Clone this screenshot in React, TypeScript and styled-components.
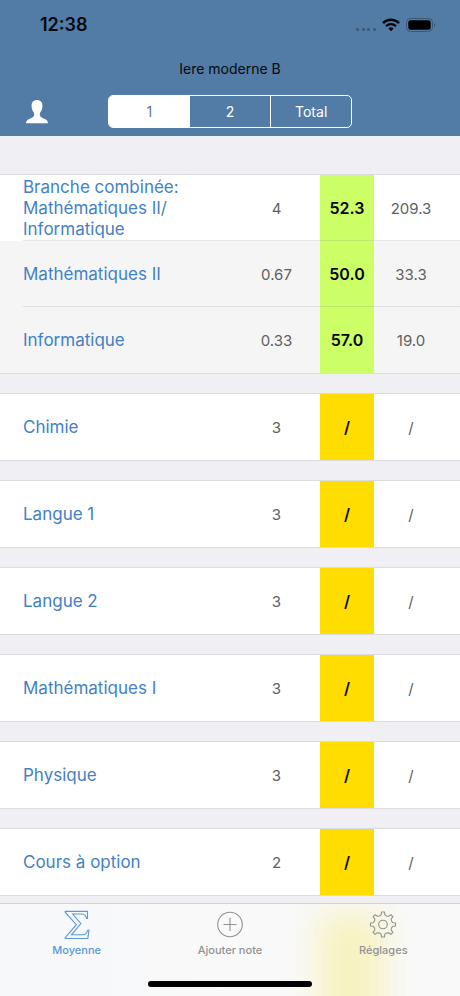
import React, { useState } from "react";
import styled, { createGlobalStyle } from "styled-components";

const GlobalStyle = createGlobalStyle`
  *, *::before, *::after { box-sizing: border-box; }
  body {
    margin: 0;
    background: #efeff4;
    font-family: Inter, "Liberation Sans", sans-serif;
  }
  button { font: inherit; border: 0; padding: 0; background: none; cursor: pointer; }
`;

const Page = styled.div`
  display: flex;
  flex-direction: column;
  min-height: 100vh;
`;

const Header = styled.header`
  position: sticky;
  top: 0;
  z-index: 1;
  background: #527ca5;
  padding-bottom: 8px;
`;

const StatusBar = styled.div`
  display: flex;
  align-items: center;
  justify-content: space-between;
  height: 52px;
  padding: 0 24px 2px 40px;
`;

const Clock = styled.time`
  font-size: 18px;
  line-height: 24px;
  font-weight: 600;
  color: #05090d;
`;

const StatusIcons = styled.div`
  display: flex;
  align-items: center;
  gap: 6px;
`;

const Title = styled.h1`
  margin: 0;
  padding: 6px 0 16px;
  font-size: 14px;
  line-height: 21px;
  font-weight: 400;
  text-align: center;
  color: #05090d;
`;

const Controls = styled.div`
  display: grid;
  grid-template-columns: 1fr 244px 1fr;
  align-items: center;
`;

const ProfileButton = styled.button`
  justify-self: start;
  display: flex;
  margin-left: 25px;
`;

const Segments = styled.div`
  display: grid;
  grid-template-columns: repeat(3, 1fr);
  height: 33px;
  border: 1px solid #fff;
  border-radius: 5px;
  overflow: hidden;
`;

const Segment = styled.button<{ $active: boolean; $divided: boolean }>`
  && {
    background: ${(p) => (p.$active ? "#fff" : "transparent")};
    color: ${(p) => (p.$active ? "#527ca5" : "#fff")};
    border-left: ${(p) => (p.$divided ? "1px solid #fff" : "0")};
    font-size: 14px;
  }
`;

const Content = styled.main`
  flex: 1;
  display: flex;
  flex-direction: column;
  gap: 19px;
  padding: 38px 0 7px;
`;

const Group = styled.table`
  width: 100%;
  table-layout: fixed;
  border-collapse: separate;
  border-spacing: 0;
  border-top: 1px solid #dcdce0;
  border-bottom: 1px solid #dcdce0;
`;

const NameCol = styled.col``;
const CoefficientCol = styled.col`width: 87px;`;
const AverageCol = styled.col`width: 54px;`;
const PointsCol = styled.col`width: 86px;`;

const Row = styled.tr<{ $nested: boolean }>`
  height: 66px;
  background: ${(p) => (p.$nested ? "#f5f5f5" : "#fff")};
  &:not(:last-child) > * {
    background-image: linear-gradient(#7777882e, #7777882e);
    background-repeat: no-repeat;
    background-position: 0 100%;
    background-size: 100% 1px;
  }
  &:not(:last-child) > th { background-position: 23px 100%; }
`;

const Name = styled.th`
  padding: 0 0 0 23px;
  text-align: left;
  font-size: 17px;
  line-height: 21px;
  font-weight: 400;
  color: #4381c4;
`;

const Value = styled.td`
  padding: 0;
  text-align: center;
  font-size: 15px;
  line-height: 21px;
  color: #606060;
`;

const Average = styled(Value)<{ $graded: boolean }>`
  font-size: 16px;
  font-weight: 600;
  color: #050505;
  background-color: ${(p) => (p.$graded ? "#ccff66" : "#ffdd00")};
`;

const Points = styled(Value)`
  padding-right: 12px;
`;

const TabBar = styled.nav`
  position: sticky;
  bottom: 0;
  overflow: hidden;
  height: 93px;
  border-top: 1px solid #d2d2d7;
  background: linear-gradient(90deg, #f6f8fa, #f9f9f9 50%);
`;

const Glow = styled.div`
  position: absolute;
  top: 10px;
  bottom: -40px;
  right: 76px;
  width: 66px;
  background: #f7f2c0;
  filter: blur(16px);
`;

const Tabs = styled.div`
  position: relative;
  display: grid;
  grid-template-columns: repeat(3, 1fr);
`;

const Tab = styled.button<{ $active: boolean }>`
  && {
    display: flex;
    flex-direction: column;
    align-items: center;
    gap: 1px;
    padding-top: 5px;
    font-size: 11px;
    line-height: 16px;
    font-weight: 500;
    color: ${(p) => (p.$active ? "#5b98d6" : "#929292")};
  }
`;

const HomeIndicator = styled.div`
  position: relative;
  width: 164px;
  height: 6px;
  margin: 23px auto 0;
  border-radius: 3px;
  background: #000;
`;

const SignalDots = () => (
  <svg width="20" height="14" viewBox="0 0 20 14" fill="#3c5c7c" aria-hidden="true">
    {[0, 6, 11, 17].map((x) => (
      <rect key={x} x={x} y="10" width="3" height="3" rx="1" />
    ))}
  </svg>
);

const WifiIcon = () => (
  <svg width="18" height="14" viewBox="0 0 18 14" fill="none" stroke="#05090d" aria-hidden="true">
    <path d="M1 5.1a11.3 11.3 0 0 1 16 0" strokeWidth="2.5" />
    <path d="M4 8.2a7.1 7.1 0 0 1 10 0" strokeWidth="2.3" />
    <path d="M9 13.2 6.4 10.6a3.7 3.7 0 0 1 5.2 0z" fill="#05090d" stroke="none" />
  </svg>
);

const BatteryIcon = () => (
  <svg width="30" height="14" viewBox="0 0 30 14" aria-hidden="true">
    <rect x="0.5" y="0.5" width="26" height="13" rx="4" fill="none" stroke="#3a5876" />
    <rect x="2.3" y="2.3" width="22.4" height="9.4" rx="2.3" fill="#000" />
    <path d="M28 4.8c1.8.7 1.8 3.7 0 4.4z" fill="#3a5876" />
  </svg>
);

const PersonIcon = () => (
  <svg width="24" height="26" viewBox="0 0 24 26" fill="#fff" aria-hidden="true">
    <path d="M12 1C15.500 1 17.600 3.200 17.400 7C17.300 9.700 16.700 11.800 14.900 13.900V16.200C15.100 17.700 16.400 18.600 18.600 19.400C21.400 20.400 22.800 21.300 23 24.300H1C1.200 21.300 2.600 20.400 5.400 19.400C7.600 18.600 8.900 17.700 9.100 16.200V13.900C7.300 11.800 6.700 9.700 6.600 7C6.400 3.200 8.500 1 12 1Z" />
  </svg>
);

const SigmaIcon = () => (
  <svg width="30" height="32" viewBox="0 0 30 32" fill="none" stroke="currentColor" strokeWidth="1.1" aria-hidden="true">
    <path d="M3.200 2.400H25.500V9.400H24.600C24 6.200 22.800 5 19.500 5H10.700L18.800 14.500L9.500 25.800H20.500C23.500 25.800 24.800 24.500 25.800 21.200H27L25.800 29.500H3.200V28.700L14.300 15.700L3.200 3.200Z" />
  </svg>
);

const PlusIcon = () => (
  <svg width="30" height="32" viewBox="0 0 30 32" fill="none" stroke="currentColor" strokeWidth="1.1" aria-hidden="true">
    <circle cx="15" cy="15.5" r="12.3" />
    <path d="M15 9V22M8.500 15.500H21.500" />
  </svg>
);

const gearPath = (() => {
  const teeth = 8;
  const profile: Array<[number, number]> = [
    [-22.5, 9.2], [-12.5, 9.7], [-9.5, 10.3], [-7, 12.6], [7, 12.6], [9.5, 10.3], [12.5, 9.7],
  ];
  const points: string[] = [];
  for (let i = 0; i < teeth; i++) {
    for (const [offset, radius] of profile) {
      const angle = ((i * 360) / teeth + offset - 90) * (Math.PI / 180);
      points.push(`${(15 + radius * Math.cos(angle)).toFixed(2)} ${(15.5 + radius * Math.sin(angle)).toFixed(2)}`);
    }
  }
  return `M${points.join("L")}Z`;
})();

const GearIcon = () => (
  <svg width="30" height="32" viewBox="0 0 30 32" fill="none" stroke="currentColor" strokeWidth="1.1" strokeLinejoin="round" aria-hidden="true">
    <path d={gearPath} />
    <circle cx="15" cy="15.5" r="4.3" />
  </svg>
);

type Subject = {
  name: React.ReactNode;
  coefficient: string;
  average: string;
  points: string;
  nested?: boolean;
};

const ungraded = (name: string, coefficient: string): Subject[] => [
  { name, coefficient, average: "/", points: "/" },
];

const groups: Subject[][] = [
  [
    {
      name: <>Branche combinée:<br />Mathématiques II/<br />Informatique</>,
      coefficient: "4",
      average: "52.3",
      points: "209.3",
    },
    { name: "Mathématiques II", coefficient: "0.67", average: "50.0", points: "33.3", nested: true },
    { name: "Informatique", coefficient: "0.33", average: "57.0", points: "19.0", nested: true },
  ],
  ungraded("Chimie", "3"),
  ungraded("Langue 1", "3"),
  ungraded("Langue 2", "3"),
  ungraded("Mathématiques I", "3"),
  ungraded("Physique", "3"),
  ungraded("Cours à option", "2"),
];

const terms = ["1", "2", "Total"];

const tabs = [
  { label: "Moyenne", Icon: SigmaIcon },
  { label: "Ajouter note", Icon: PlusIcon },
  { label: "Réglages", Icon: GearIcon },
];

export default function App() {
  const [term, setTerm] = useState("1");
  const [tab, setTab] = useState("Moyenne");

  return (
    <Page>
      <GlobalStyle />
      <Header>
        <StatusBar>
          <Clock>12:38</Clock>
          <StatusIcons>
            <SignalDots />
            <WifiIcon />
            <BatteryIcon />
          </StatusIcons>
        </StatusBar>
        <Title>Iere moderne B</Title>
        <Controls>
          <ProfileButton type="button" aria-label="Profil">
            <PersonIcon />
          </ProfileButton>
          <Segments>
            {terms.map((t, i) => (
              <Segment
                key={t}
                type="button"
                $active={t === term}
                $divided={i > 0 && terms[i - 1] !== term}
                aria-pressed={t === term}
                onClick={() => setTerm(t)}
              >
                {t}
              </Segment>
            ))}
          </Segments>
        </Controls>
      </Header>

      <Content>
        {groups.map((rows, g) => (
          <Group key={g}>
            <colgroup>
              <NameCol />
              <CoefficientCol />
              <AverageCol />
              <PointsCol />
            </colgroup>
            <tbody>
              {rows.map((s, r) => (
                <Row key={r} $nested={!!s.nested}>
                  <Name scope="row">{s.name}</Name>
                  <Value>{s.coefficient}</Value>
                  <Average $graded={s.average !== "/"}>{s.average}</Average>
                  <Points>{s.points}</Points>
                </Row>
              ))}
            </tbody>
          </Group>
        ))}
      </Content>

      <TabBar>
        <Glow />
        <Tabs>
          {tabs.map(({ label, Icon }) => (
            <Tab key={label} type="button" $active={label === tab} onClick={() => setTab(label)}>
              <Icon />
              {label}
            </Tab>
          ))}
        </Tabs>
        <HomeIndicator />
      </TabBar>
    </Page>
  );
}
